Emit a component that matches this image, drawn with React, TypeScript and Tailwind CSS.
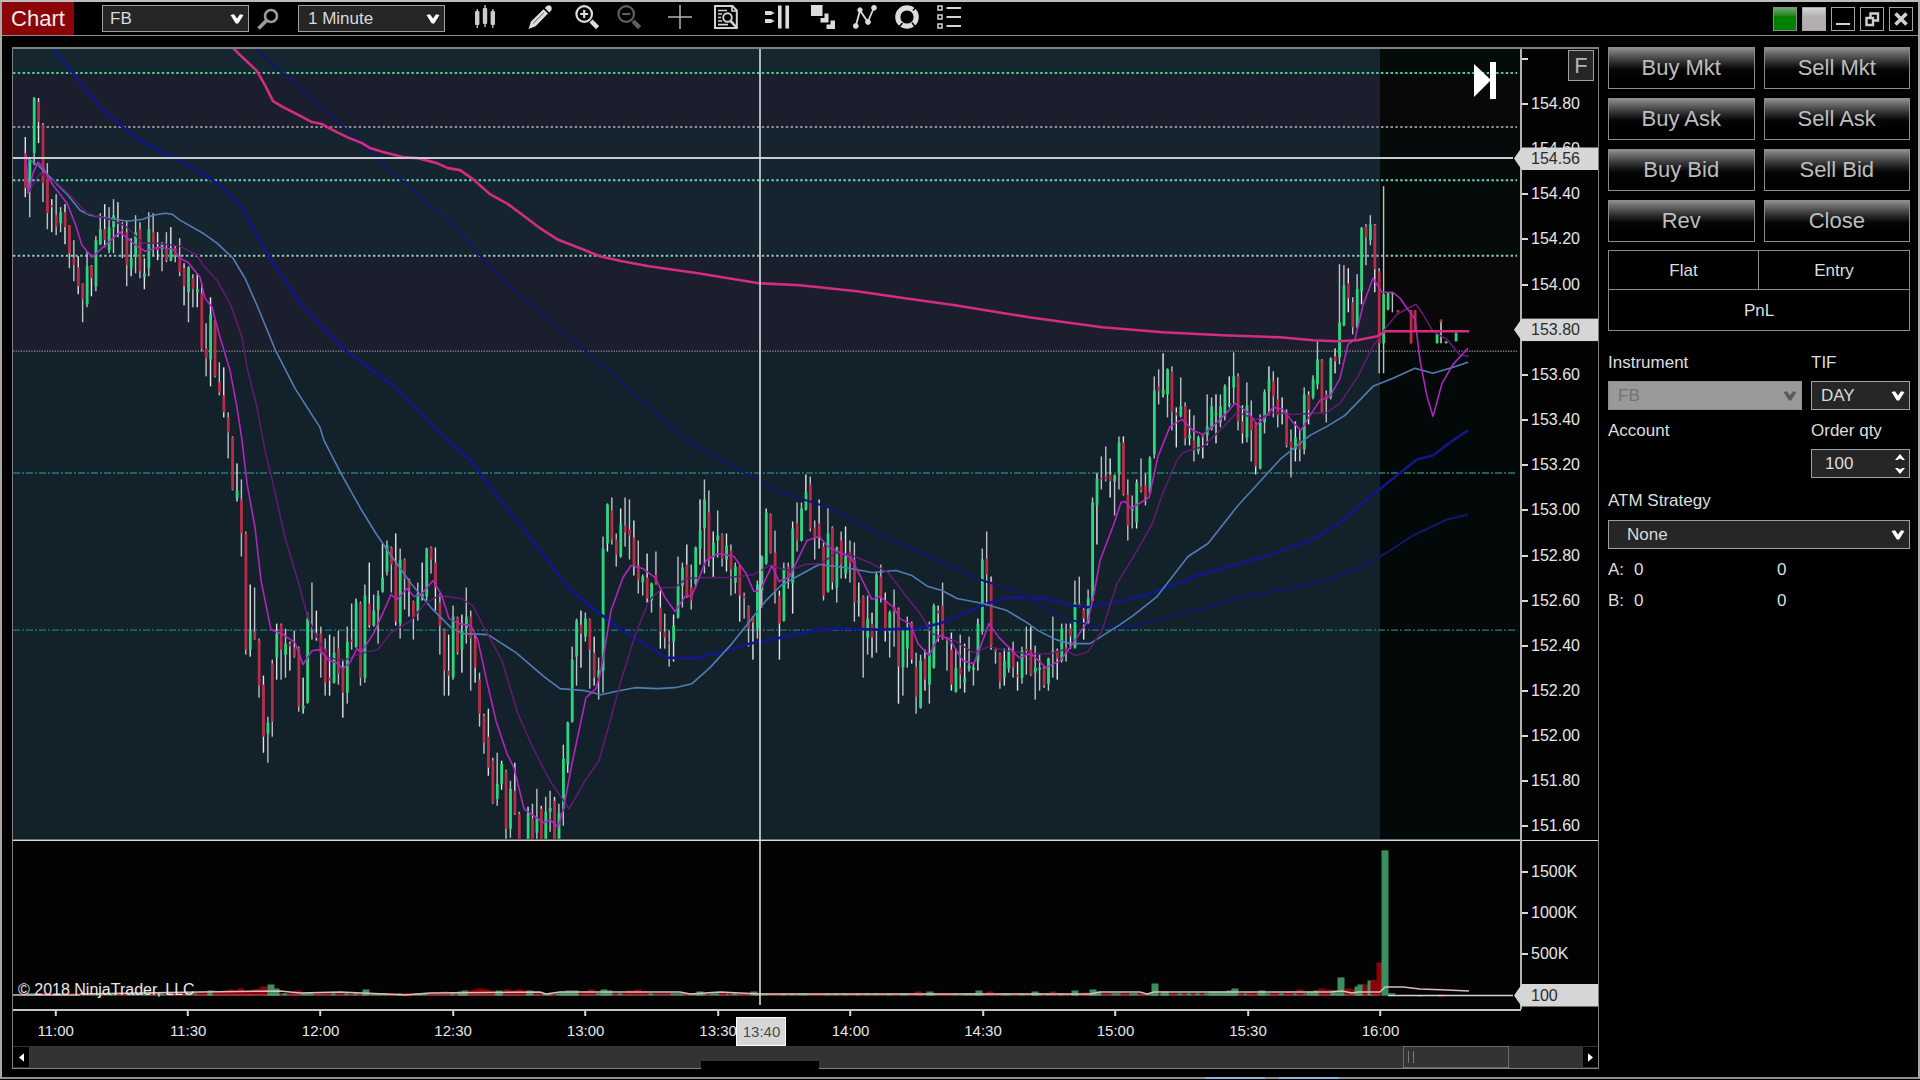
import React from "react";

/* ---------- Price data: colour + high,bodyTop,bodyBottom,low for one minute bars ---------- */

const CANDLES =
  "r137,153,188,197 g158,160,190,217 g97,98,153,165 r98,102,122,143 r123,125,183,202 r163,177,213,229 r199,205,207,232 r194,215,227,235 g207,212,223,232 r204,212,227,244 " +
  "r225,225,253,268 r240,258,265,281 r256,267,286,294 r283,283,299,322 g251,266,304,307 r265,266,278,296 g236,240,286,291 g213,229,244,245 r204,229,240,247 g207,227,250,253 " +
  "g199,215,227,253 r202,222,224,237 r222,229,231,258 r220,232,265,286 g238,258,268,276 g215,232,257,273 r222,229,271,278 g258,273,277,289 g212,229,268,276 r213,232,243,256 " +
  "r232,247,250,260 g242,243,249,271 r232,248,260,262 g227,248,260,261 r245,248,255,262 r238,257,272,276 r263,268,286,305 g266,267,292,322 r274,278,289,307 g273,289,292,307 " +
  "r283,293,349,351 r323,348,358,376 g297,314,359,386 r320,321,376,377 r362,382,392,395 r367,395,412,417 r412,417,432,458 r436,437,489,490 g463,490,498,501 r479,499,533,556 " +
  "r531,533,649,654 g584,630,649,656 r587,631,638,639 r638,640,685,697 r675,684,736,752 g716,722,733,762 r659,663,721,736 g623,633,657,679 r623,624,649,679 g628,643,654,677 " +
  "r641,643,646,670 r630,647,656,657 r646,647,706,711 g677,705,708,713 g612,618,702,703 g582,629,631,639 r610,632,637,640 r626,633,653,677 r638,648,682,695 r634,677,680,695 " +
  "g636,652,682,683 r630,648,673,684 r659,667,692,717 g626,641,692,703 r603,639,641,649 g598,602,646,647 r601,603,677,685 g584,595,677,682 r562,603,625,627 g594,610,625,626 " +
  "g590,595,609,643 g543,577,591,592 g540,545,571,575 r546,547,564,592 r533,563,621,625 g548,559,623,638 r558,559,578,609 r578,579,588,616 r600,601,617,639 g582,593,611,620 " +
  "g562,593,597,600 g547,548,596,600 r546,547,559,573 r547,562,587,610 r593,602,625,654 r628,629,670,695 r634,670,675,695 g605,616,677,679 r616,617,652,654 g614,630,649,672 " +
  "g587,616,628,643 r610,616,638,690 r633,637,667,682 r672,679,713,726 r713,715,742,753 r708,736,767,775 r757,760,802,803 g752,783,798,805 g760,763,783,789 r769,771,828,839 " +
  "g780,788,828,837 r762,790,813,814 r811,813,839,839 r839,839,839,839 g806,813,839,839 r803,818,839,839 g788,817,832,839 r805,808,839,839 g796,811,839,839 g790,807,811,831 " +
  "r796,800,839,839 g803,812,839,839 g744,758,808,825 g721,722,764,772 g646,659,721,722 g618,620,656,685 r610,624,633,667 g612,618,636,641 r618,619,649,688 r636,652,677,685 " +
  "g657,670,677,699 g536,548,670,692 g503,504,543,551 r497,510,539,544 r533,539,554,566 g508,523,556,557 r497,525,532,546 r499,529,535,559 r520,537,565,575 r540,565,580,593 " +
  "g574,576,582,595 r553,577,598,602 g582,583,600,612 r551,574,583,584 r589,607,631,648 r613,631,637,648 r630,641,643,666 g614,625,641,661 g556,585,617,618 g562,567,585,607 " +
  "r544,564,596,597 r564,587,600,609 g546,547,583,587 g499,530,548,564 g479,499,528,573 r490,512,560,566 g531,542,557,577 g510,535,540,557 r533,534,558,566 g533,545,559,571 " +
  "r544,550,569,595 g562,566,582,593 r565,566,595,621 r592,595,598,618 r605,606,628,646 r616,617,622,659 g580,584,628,638 g555,556,590,607 g508,512,563,564 r513,514,552,553 " +
  "r530,552,590,603 r590,595,623,659 g562,567,620,621 r562,566,578,588 g521,528,583,613 r502,523,540,551 g502,508,540,541 g474,492,509,510 r476,484,528,531 r520,527,537,559 " +
  "r499,523,537,548 r542,546,595,600 g506,533,591,592 r526,527,582,589 g546,547,587,602 r531,540,564,578 g526,556,573,578 r540,551,563,582 r542,559,602,621 g582,600,602,616 " +
  "r595,596,628,677 g595,618,637,654 r612,623,637,657 g572,574,631,652 r564,576,597,602 r592,600,630,641 g610,612,632,657 r589,606,611,646 r607,608,666,703 g628,630,667,695 " +
  "g616,627,648,667 r621,622,659,663 r652,666,696,713 g654,660,707,708 r649,658,679,690 g621,653,684,703 g603,605,667,668 r605,610,613,641 r582,605,638,639 r637,638,640,670 " +
  "r632,649,684,690 g648,667,691,692 r634,667,674,688 g643,677,682,692 g636,665,668,671 g662,667,669,685 g618,623,661,670 g548,559,631,634 r531,558,574,605 r576,581,645,649 " +
  "r648,649,651,663 r652,653,681,688 g648,660,677,685 g646,651,668,672 r641,650,667,677 r661,674,676,690 g646,650,677,683 r626,648,651,674 r626,649,674,675 g645,667,672,699 " +
  "g654,667,669,690 r666,667,685,687 g657,658,683,690 g616,650,652,677 r648,650,658,679 g623,628,660,662 r623,647,652,661 r623,628,636,648 g580,602,647,648 r576,603,605,607 " +
  "r606,609,618,639 g589,598,622,623 g497,502,600,601 g473,478,505,544 r456,477,479,489 r446,476,479,481 r458,474,481,497 g474,475,481,515 g436,442,474,489 r436,442,494,495 " +
  "r479,494,525,540 g495,508,510,528 g479,482,522,528 r458,486,490,492 r473,485,497,505 g456,458,492,494 g376,390,454,458 r369,386,391,404 g353,389,394,397 g368,369,394,417 " +
  "r366,371,412,430 r407,412,415,447 g377,406,416,417 r402,406,438,445 g409,435,438,445 r415,440,450,461 g435,437,451,454 r434,435,437,458 g394,426,435,445 g397,406,429,430 " +
  "g394,412,415,443 g394,406,422,427 g384,386,414,420 g376,403,405,407 g352,376,387,403 r373,376,421,430 r405,421,433,443 g382,405,437,442 r400,417,430,461 r422,423,466,474 " +
  "g414,422,468,469 g389,392,422,433 g366,379,391,415 r371,381,396,417 r377,399,415,427 g397,412,414,424 r409,412,445,447 r429,441,447,477 g421,437,449,461 r430,440,449,461 " +
  "g387,394,449,454 r391,394,410,424 g375,379,397,399 g341,359,384,389 r359,360,412,413 r390,394,399,422 g357,358,397,399 r348,356,361,373 g264,322,357,364 g265,285,325,326 " +
  "r268,283,298,312 r297,302,327,334 g274,289,327,328 g227,228,291,304 r224,226,237,265 g215,224,240,245 r224,225,269,292 r268,271,343,373 g186,294,343,373 g292,293,309,310 " +
  "g293,293,294,312";

const FIRST_X = 25.3;
const BAR_STEP = 4.41;

const bars = CANDLES.split(" ").map((row, i) => {
  const [high, top, bottom, low] = row.slice(1).split(",").map(Number);
  return { up: row[0] === "g", x: FIRST_X + i * BAR_STEP, high, top, bottom, low };
});

const lateBars = [
  { up: false, x: 1398, high: 310, top: 310, bottom: 312, low: 312 },
  { up: false, x: 1411, high: 310, top: 310, bottom: 343, low: 343 },
  { up: false, x: 1415, high: 310, top: 310, bottom: 330, low: 330 },
  { up: true, x: 1437, high: 333, top: 334, bottom: 343, low: 343 },
  { up: false, x: 1441, high: 321, top: 319, bottom: 322, low: 343 },
  { up: true, x: 1446, high: 341, top: 341, bottom: 343, low: 343 },
  { up: true, x: 1456, high: 332, top: 333, bottom: 341, low: 341 },
];

const allBars = [...bars, ...lateBars];

/* ---------- Indicator lines ---------- */

const VWAP =
  "231,46 240,55 257,71 265,85 273,101 283,107 295,113 312,122 322,124 333,130 347,137 362,143 370,148 383,152 403,157 417,158 437,163 448,168 460,170 473,179 490,194 508,204 527,218 540,228 557,239 580,248 600,256 622,261 649,266 698,273 759,283 800,285 857,291 905,298 955,305 1029,317 1102,327 1163,332 1223,335 1280,337 1313,340 1337,341 1357,340 1377,336 1385,331 1469,331";
const SLOW_BLUE =
  "27,158 38,165 53,180 67,194 80,210 90,215 110,218 127,221 143,219 153,215 165,213 172,214 180,220 203,233 217,243 233,258 245,278 257,305 275,349 295,388 320,427 324,440 342,475 360,507 376,533 391,555 411,583 431,607 451,627 463,633 488,634 516,652 544,676 560,688 585,690 601,694 619,690 635,687 657,688 675,687 692,683 710,667 732,643 748,623 766,600 781,585 797,576 819,564 845,567 872,572 896,570 912,575 928,586 942,590 957,598 983,603 1007,610 1027,622 1038,630 1056,639 1070,643 1090,643 1120,624 1133,615 1157,596 1188,556 1208,543 1223,524 1238,505 1260,481 1280,459 1310,435 1327,426 1345,415 1373,386 1393,378 1415,368 1433,373 1453,367 1468,362";
const FAST_MAGENTA =
  "26,154 28,193 33,173 38,162 43,167 53,185 67,203 75,223 82,245 92,257 103,247 120,232 133,243 145,251 158,247 173,249 180,258 188,262 200,277 205,298 212,307 220,337 230,370 237,407 242,440 247,483 255,527 261,580 271,629 283,634 295,642 303,664 312,650 320,649 328,659 336,662 343,668 350,662 357,648 361,652 374,632 384,610 391,594 397,599 407,588 414,596 421,594 433,580 441,593 449,618 459,623 471,625 478,640 486,677 496,720 507,753 514,767 524,808 544,822 550,819 558,826 563,810 572,763 586,697 596,688 601,670 611,610 623,577 631,565 643,568 655,577 665,597 675,611 685,596 692,595 706,560 718,553 734,556 746,573 754,591 760,590 772,565 779,581 789,577 807,540 819,536 829,547 851,557 861,577 872,599 880,596 894,607 900,618 910,623 918,643 929,655 939,635 949,638 963,660 974,663 989,623 999,637 1019,657 1031,653 1046,667 1060,660 1070,647 1088,620 1094,593 1100,560 1114,523 1121,502 1125,501 1131,508 1149,497 1158,456 1170,426 1182,419 1193,430 1203,434 1213,426 1227,412 1235,403 1248,412 1257,424 1265,417 1273,407 1283,409 1293,422 1301,430 1310,415 1320,400 1330,396 1340,378 1348,344 1355,339 1363,305 1373,278 1382,292 1393,292 1400,298 1407,308 1415,319 1420,360 1427,396 1433,416 1442,383 1453,364 1468,348";
const SLOW_PURPLE =
  "28,193 40,173 57,183 72,197 87,213 113,220 127,227 143,243 157,243 180,246 197,255 203,265 217,280 230,303 242,337 247,367 257,407 265,450 273,483 285,537 297,577 308,617 316,635 328,657 344,660 360,653 378,649 391,632 411,620 425,603 439,595 461,598 473,605 482,623 502,660 518,713 532,745 550,780 569,808 585,780 599,760 611,717 621,680 635,635 649,600 663,587 675,587 686,578 706,577 730,577 754,574 769,565 789,570 805,564 821,563 837,552 852,555 872,563 888,572 904,593 920,613 932,633 955,640 973,652 989,646 1007,650 1027,653 1050,653 1064,649 1076,655 1088,651 1102,630 1117,583 1133,557 1152,524 1163,492 1177,460 1183,452 1203,446 1220,430 1237,412 1257,419 1273,412 1293,414 1327,412 1340,403 1358,376 1373,346 1387,326 1397,314 1408,308 1416,304 1423,314 1433,331 1447,339 1460,355 1469,356";
const NAVY_A =
  "50,45 73,73 100,107 120,125 143,142 173,157 200,172 220,185 240,205 250,223 270,258 300,303 345,350 393,385 447,440 471,460 498,497 526,532 550,563 569,588 593,608 620,628 647,645 667,657 694,658 718,652 750,643 781,637 813,630 837,628 876,629 916,628 940,623 963,613 987,603 1007,597 1046,598 1066,604 1086,607 1114,602 1145,595 1173,585 1197,575 1237,564 1267,555 1310,540 1337,524 1367,499 1393,478 1417,459 1433,455 1450,442 1468,430";
const NAVY_B =
  "252,45 287,77 338,122 380,160 413,190 453,225 480,255 514,290 551,321 612,373 650,408 688,440 718,458 758,480 781,492 829,507 868,528 916,550 948,565 983,580 1019,592 1034,600 1058,615 1090,625 1121,627 1149,622 1180,613 1213,606 1240,596 1280,590 1327,580 1360,567 1387,552 1413,535 1447,519 1468,514";
const VOLUME_AVG =
  "80,993 200,991 280,990 300,992 340,991 385,993 405,994 430,992 540,991 546,993 560,991 680,991 690,993 720,991 760,993 1090,993 1100,991 1140,991 1147,993 1154,991 1330,991 1342,990 1352,992 1358,991 1380,991 1385,986 1403,986 1420,988 1447,989 1469,990";

const BANDS = [
  { y: 46, h: 27, day: "#14262f", night: "#030c09" },
  { y: 73, h: 54, day: "#1b1f2d", night: "#080808" },
  { y: 127, h: 128, day: "#16242f", night: "#050b0b" },
  { y: 255, h: 96, day: "#1b1f2d", night: "#090808" },
  { y: 351, h: 488, day: "#13212b", night: "#030909" },
];

const LEVELS = [
  { y: 73, color: "#3fd694", width: 2, dash: "2.4 2.4" },
  { y: 127, color: "#8f8f93", width: 2, dash: "2.4 2.4" },
  { y: 180, color: "#62d8bd", width: 2, dash: "2.4 2.4" },
  { y: 255.5, color: "#84cdb8", width: 2, dash: "2.4 2.4" },
  { y: 351, color: "#77777d", width: 1.4, dash: "1.4 1.2" },
  { y: 472.5, color: "#1f7f7b", width: 1.4, dash: "7 2 2 2" },
  { y: 629.5, color: "#1f7f7b", width: 1.4, dash: "7 2 2 2" },
];

const SPIKES: [number, number, boolean][] = [
  [200, 3, false], [206, 3, false], [211, 5, true], [216, 4, false], [221, 4, false], [226, 5, false],
  [231, 6, false], [236, 5, false], [241, 7, false], [246, 4, false], [250, 5, false], [255, 6, false],
  [260, 7, false], [264, 9, false], [271, 11, true], [276, 7, true], [298, 5, false], [366, 6, true],
  [445, 4, false], [461, 4, true], [465, 5, true], [471, 5, false], [476, 6, false], [481, 7, false],
  [486, 6, false], [491, 5, false], [499, 5, true], [507, 6, false], [514, 5, false], [519, 6, false],
  [524, 5, false], [530, 5, true], [537, 4, false], [563, 4, true], [569, 5, true], [575, 5, true],
  [585, 4, false], [591, 6, false], [604, 6, true], [609, 5, true], [630, 5, false], [638, 6, false],
  [645, 4, false], [700, 4, true], [723, 4, false], [754, 4, true], [918, 4, false], [930, 4, true],
  [979, 5, true], [990, 4, false], [1035, 4, true], [1053, 4, false], [1075, 5, true], [1085, 3, false],
  [1093, 6, true], [1098, 4, true], [1155, 12, true], [1165, 4, true], [1212, 4, true], [1218, 4, true],
  [1225, 4, true], [1230, 5, true], [1235, 7, true], [1250, 4, false], [1262, 5, true], [1275, 4, false],
  [1290, 4, false], [1300, 6, false], [1310, 4, true], [1317, 5, true], [1322, 7, false], [1328, 6, false],
  [1334, 5, true], [1341, 18, true], [1348, 7, false], [1353, 6, false], [1358, 9, true], [1361, 11, true],
  [1366, 11, false], [1371, 15, true], [1374, 15, false], [1380, 33, false], [1385, 145, true],
];

/* ---------- Plot geometry ---------- */

const PLOT = { x: 13, y: 49, w: 1507, h: 959 };
const xPct = (x: number) => `${((x - PLOT.x) / PLOT.w) * 100}%`;
const yPct = (y: number) => `${((y - PLOT.y) / PLOT.h) * 100}%`;

const PRICES = Array.from({ length: 17 }, (_, i) => ({
  label: (154.8 - i * 0.2).toFixed(2),
  y: 104 + i * 45.1,
}));
const VOLUMES = [
  { label: "1500K", y: 871 },
  { label: "1000K", y: 912 },
  { label: "500K", y: 953 },
];
const TIMES = ["11:00", "11:30", "12:00", "12:30", "13:00", "13:30", "14:00", "14:30", "15:00", "15:30", "16:00"].map(
  (label, i) => ({ label, x: 55.6 + i * 132.4 }),
);

function Line({ points, color, width }: { points: string; color: string; width: number }) {
  return (
    <polyline points={points} fill="none" stroke={color} strokeWidth={width} strokeLinejoin="round" vectorEffect="non-scaling-stroke" />
  );
}

function Plot() {
  return (
    <svg
      className="block h-full w-full"
      viewBox={`${PLOT.x} ${PLOT.y} ${PLOT.w} ${PLOT.h}`}
      preserveAspectRatio="none"
      role="img"
      aria-label="FB one minute price and volume chart"
    >
      {BANDS.map((b) => (
        <g key={b.y}>
          <rect x={13} y={b.y} width={1367} height={b.h} fill={b.day} />
          <rect x={1380} y={b.y} width={140} height={b.h} fill={b.night} />
        </g>
      ))}
      {LEVELS.map((l) => (
        <line key={l.y} x1={13} x2={1517} y1={l.y} y2={l.y} stroke={l.color} strokeWidth={l.width} strokeDasharray={l.dash} />
      ))}
      {allBars.map((b, i) => (
        <rect key={i} x={b.x - 0.7} y={b.high} width={1.4} height={b.low - b.high} fill={i % 3 ? "#b9c2c4" : "#dfe6e6"} />
      ))}
      {allBars.map((b, i) => (
        <rect key={i} x={b.x - 1.3} y={b.top} width={2.8} height={Math.max(b.bottom - b.top, 0)} fill={b.up ? "#2bd67f" : "#b62d48"} />
      ))}
      <Line points={NAVY_A} color="#10178a" width={2.6} />
      <Line points={NAVY_B} color="#13176b" width={2} />
      <Line points={SLOW_BLUE} color="#527db3" width={1.6} />
      <Line points={SLOW_PURPLE} color="#641a72" width={1.5} />
      <Line points={FAST_MAGENTA} color="#b324bf" width={1.6} />
      <Line points={VWAP} color="#d62b83" width={2.6} />
      <line x1={13} x2={1513} y1={158} y2={158} stroke="#c9cfd0" strokeWidth={2} />

      <rect x={13} y={838} width={1507} height={170} fill="#030303" />
      <line x1={13} x2={1520} y1={839.5} y2={839.5} stroke="#dcdcdc" strokeWidth={1.5} />
      {bars.map((b, i) => (
        <rect key={i} x={b.x - 3} y={992} width={6} height={2.5} fill={b.up ? "#2f7350" : "#7d0a10"} />
      ))}
      {SPIKES.map(([x, h, up]) => (
        <rect key={x} x={x - 3.5} y={994.5 - h} width={7} height={h} fill={up ? "#3a8f60" : "#8b0208"} />
      ))}
      <rect x={1417} y={994} width={6} height={2} fill="#123222" />
      <rect x={1438} y={993} width={7} height={3} fill="#4d0a0e" />
      <line x1={13} x2={80} y1={994} y2={994} stroke="#c9c9c9" strokeWidth={1.4} />
      <line x1={1388} x2={1513} y1={994.5} y2={994.5} stroke="#d2d2d2" strokeWidth={1.4} />
      <polyline points="80,994 1380,994" fill="none" stroke="#d8b8b4" strokeOpacity={0.5} strokeWidth={1} />
      <Line points={VOLUME_AVG} color="#d5c0bc" width={1.4} />

      <line x1={760} x2={760} y1={46} y2={1004} stroke="#d8dcdc" strokeWidth={1.6} />
      <path d="M1474 64 L1491 80 L1474 97 Z" fill="#fff" />
      <rect x={1490} y={62} width={6} height={37} fill="#fff" />
    </svg>
  );
}

function AxisLabel({ label, y }: { label: string; y: number }) {
  return (
    <div className="absolute left-0 flex -translate-y-1/2 items-center gap-[3px]" style={{ top: yPct(y) }}>
      <span className="h-[2px] w-[6px] bg-[#d8d8d8]" />
      <span className="text-[16px] leading-[18px] text-[#e6e6e6]">{label}</span>
    </div>
  );
}

function AxisMarker({ label, y }: { label: string; y: number }) {
  return (
    <div
      className="absolute -left-2 right-0 flex h-[23px] -translate-y-1/2 items-center bg-[#d6d6d6] pl-[17px] text-[16px] leading-[18px] text-[#2c2c2c] [clip-path:polygon(0_50%,8px_0,100%_0,100%_100%,8px_100%)]"
      style={{ top: yPct(y) }}
    >
      {label}
    </div>
  );
}

function Chevron({ className }: { className: string }) {
  return (
    <svg viewBox="0 0 14 12" className={`pointer-events-none absolute top-1/2 h-3 w-[14px] -translate-y-1/2 ${className}`} aria-hidden="true">
      <path d="M0.5 2 L4 1.2 L7 5.6 L10 1.2 L13.5 2 L8.2 10.5 L5.8 10.5 Z" fill="currentColor" />
    </svg>
  );
}

function SelectBox({ id, label, value, className, disabled, pad }: { id: string; label?: string; value: string; className: string; disabled?: boolean; pad: string }) {
  return (
    <div className={`relative ${className}`}>
      <select
        id={id}
        aria-label={label}
        defaultValue={value}
        disabled={disabled}
        className={`h-full w-full appearance-none border text-[17px] leading-5 opacity-100 outline-none ${pad} ${
          disabled ? "border-[#8e8e8e] bg-[#999] text-[#737373]" : "border-[#a0a0a0] bg-[#262626] text-[#dadada]"
        }`}
      >
        <option>{value}</option>
      </select>
      <Chevron className={disabled ? "right-[5px] text-[#5a5a5a]" : "right-[5px] text-white"} />
    </div>
  );
}

/* ---------- Toolbar icons, each drawn on a 24 unit square ---------- */

const TOOLS: { name: string; gap: string; icon: React.ReactNode }[] = [
  {
    name: "Chart style",
    gap: "ml-[28px]",
    icon: (
      <g fill="#c9cdd2">
        <rect x="2" y="6" width="4.4" height="14" rx="1" />
        <rect x="3.6" y="4" width="1.3" height="19" />
        <rect x="9.8" y="3" width="4.4" height="16" rx="1" />
        <rect x="11.4" y="0" width="1.3" height="22" />
        <rect x="17.6" y="6" width="4.4" height="14" rx="1" />
        <rect x="19.2" y="4" width="1.3" height="19" />
      </g>
    ),
  },
  {
    name: "Drawing tools",
    gap: "ml-[31px]",
    icon: (
      <g>
        <path d="M0.5 24 L3 16.5 L15.5 4.2 L20 8.6 L7.6 21.2 Z" fill="#dedede" />
        <path d="M16.8 3 L18.8 1 Q21 -0.4 23 1.3 Q24.8 3.4 23.2 5.4 L21.2 7.4 Z" fill="#dedede" />
        <path d="M5 18.5 L16 7.6" stroke="#444" strokeWidth="0.9" />
      </g>
    ),
  },
  {
    name: "Zoom in",
    gap: "ml-[23px]",
    icon: (
      <g fill="none" stroke="#dcdcdc">
        <circle cx="9.2" cy="9" r="7.8" strokeWidth="2.2" />
        <path d="M9.2 5v8M5.2 9h8" strokeWidth="2.2" />
        <path d="M16 16 L22.6 22.6" strokeWidth="4.4" />
      </g>
    ),
  },
  {
    name: "Zoom out",
    gap: "ml-[18px]",
    icon: (
      <g fill="none" stroke="#5f5f5f">
        <circle cx="9.2" cy="9" r="7.8" strokeWidth="2.2" />
        <path d="M5.2 9h8" strokeWidth="2.2" />
        <path d="M16 16 L22.6 22.6" strokeWidth="4.4" />
      </g>
    ),
  },
  {
    name: "Crosshair",
    gap: "ml-[27px]",
    icon: <path d="M12 0v24M0 12h24" stroke="#b4b4b4" strokeWidth="1.5" />,
  },
  {
    name: "Data box",
    gap: "ml-[22px]",
    icon: (
      <g fill="none" stroke="#d4d4d4">
        <path d="M1 1H18.5L22.8 5.5V23H1Z" strokeWidth="2" />
        <path d="M18 1V6H23" strokeWidth="1.6" />
        <path d="M4 5.5h9M4 9h4M4 12.5h3M4 16h4M4 19.6h10" strokeWidth="1.6" />
        <circle cx="13.5" cy="12.5" r="4.3" strokeWidth="1.9" />
        <path d="M16.5 15.8 L23 23" strokeWidth="2.6" />
      </g>
    ),
  },
  {
    name: "Chart trader",
    gap: "ml-[27px]",
    icon: (
      <g fill="#dcdcdc">
        <rect x="13" y="0.5" width="3.6" height="23" />
        <rect x="20.4" y="0.5" width="3.6" height="23" />
        <path d="M0 6H6L9.5 8L6 10H0Z" />
        <path d="M0 14H6L9.5 16L6 18H0Z" />
      </g>
    ),
  },
  {
    name: "Data series",
    gap: "ml-[22px]",
    icon: (
      <g fill="#dcdcdc">
        <rect x="0" y="0" width="11.5" height="11" />
        <path d="M13.5 8.5H17.5V17.5H9.5V13H13.5Z" />
        <path d="M19.5 15.5H24V24H15.5V19.5H19.5Z" />
      </g>
    ),
  },
  {
    name: "Indicators",
    gap: "ml-[18px]",
    icon: (
      <g fill="#dcdcdc" stroke="#dcdcdc">
        <path d="M2.8 21 L7 5.5 L14.8 17 L20.8 3" fill="none" strokeWidth="1.8" />
        <circle cx="2.8" cy="21" r="2.4" />
        <circle cx="7" cy="5" r="2.2" />
        <circle cx="15" cy="17" r="2.4" />
        <circle cx="21" cy="2.8" r="2.4" />
      </g>
    ),
  },
  {
    name: "Strategies",
    gap: "ml-[18px]",
    icon: (
      <g fill="none">
        <circle cx="12" cy="12" r="9.2" stroke="#dcdcdc" strokeWidth="5.2" />
        <path d="M18 5.5 L22 1.5M17 17.5 L20.5 22.5M7.5 18 L4 22" stroke="#000" strokeWidth="1.5" />
      </g>
    ),
  },
  {
    name: "Properties",
    gap: "ml-[18px]",
    icon: (
      <g fill="none" stroke="#d4d4d4">
        <path d="M1 1h4v4h-4zM1 10h4v4h-4zM1 19h4v4h-4z" strokeWidth="1.5" />
        <path d="M9.5 3H24M9.5 12H24M9.5 21H24" strokeWidth="2" />
      </g>
    ),
  },
];

function Toolbar() {
  return (
    <header className="flex h-[34px] shrink-0 items-center border-b border-[#8a8a8a] bg-black">
      <h1 className="flex h-full w-[72px] items-center justify-center bg-[#8b0508] text-[22px] leading-6 text-[#ececec]">Chart</h1>
      <SelectBox id="symbol" label="Symbol" value="FB" className="ml-7 h-[27px] w-[147px]" pad="pl-[7px]" />
      <button type="button" aria-label="Search instrument" className="ml-2 h-[22px] w-[22px]">
        <svg viewBox="0 0 22 22" className="h-full w-full" fill="none" stroke="#9c9c9c">
          <circle cx="14" cy="8" r="6" strokeWidth="2.6" />
          <path d="M9.5 12.5 L1.5 20.5" strokeWidth="3.6" />
        </svg>
      </button>
      <SelectBox id="interval" label="Interval" value="1 Minute" className="ml-[19px] h-[27px] w-[147px]" pad="pl-[9px]" />
      <div className="flex h-full items-start pt-[3px]">
        {TOOLS.map((t) => (
          <button key={t.name} type="button" aria-label={t.name} className={`h-6 w-6 shrink-0 ${t.gap}`}>
            <svg viewBox="0 0 24 24" className="h-full w-full overflow-visible">
              {t.icon}
            </svg>
          </button>
        ))}
      </div>
      <div className="ml-auto flex items-center gap-[5px] pr-[5px]">
        <button type="button" aria-label="Instrument link" className="h-6 w-6 border border-[#8a8a8a] bg-linear-to-b from-[#6ba86b] via-[#008000] via-40% to-[#008000]" />
        <button type="button" aria-label="Interval link" className="h-6 w-6 border border-[#aaa] bg-linear-to-b from-[#d6d6d6] via-[#b3afb1] via-40% to-[#b0adae]" />
        <button type="button" aria-label="Minimize" className="h-6 w-6 border border-[#a5a5a5]">
          <svg viewBox="0 0 22 22" className="h-full w-full">
            <rect x="4" y="15" width="14" height="2" fill="#d0d0d0" />
          </svg>
        </button>
        <button type="button" aria-label="Restore" className="h-6 w-6 border border-[#a5a5a5]">
          <svg viewBox="0 0 22 22" className="h-full w-full" fill="none" stroke="#cfcfcf" strokeWidth="2.4">
            <path d="M5.5 10H12V17H5.5Z" />
            <path d="M9.5 9V5.5H17V12.5H13" />
          </svg>
        </button>
        <button type="button" aria-label="Close window" className="h-6 w-6 border border-[#a5a5a5]">
          <svg viewBox="0 0 22 22" className="h-full w-full" stroke="#d0d0d0" strokeWidth="3.6">
            <path d="M5.5 5.5 L16.5 16.5M16.5 5.5 L5.5 16.5" />
          </svg>
        </button>
      </div>
    </header>
  );
}

function ChartPanel() {
  return (
    <section className="relative flex min-w-0 flex-1 flex-col border border-t-2 border-[#808080] bg-black">
      <div className="flex min-h-0 flex-1">
        <div className="relative min-w-0 flex-1">
          <div className="absolute inset-0">
            <Plot />
          </div>
          <p className="absolute bottom-[9px] left-[5px] text-[16px] leading-5 whitespace-nowrap text-[#e8e8e8]">© 2018 NinjaTrader, LLC</p>
        </div>
        <div className="relative w-[78px] shrink-0 border-l-2 border-[#b4b4b4] bg-[#020202]">
          <span className="absolute left-0 h-[2px] w-[6px] bg-[#d8d8d8]" style={{ top: yPct(58) }} />
          {[...PRICES, ...VOLUMES].map((p) => (
            <AxisLabel key={p.label} label={p.label} y={p.y} />
          ))}
          <span className="absolute inset-x-0 h-px bg-[#dcdcdc]" style={{ top: yPct(839) }} />
          <AxisMarker label="154.56" y={158.5} />
          <AxisMarker label="153.80" y={329.5} />
          <AxisMarker label="100" y={994.5} />
          <button type="button" className="absolute top-[1px] right-[4px] h-[31px] w-[26px] border border-[#a0a0a0] bg-[#262626] text-[22px] leading-7 text-[#b4b4b4]">
            F
          </button>
        </div>
      </div>
      <div className="flex h-[37px] shrink-0">
        <div className="relative min-w-0 flex-1 border-t-2 border-[#c4c4c4]">
          {TIMES.map((t) => (
            <div key={t.label} className="absolute top-0 flex -translate-x-1/2 flex-col items-center gap-[6px]" style={{ left: xPct(t.x) }}>
              <span className="h-[5px] w-[2px] bg-[#d8d8d8]" />
              <span className="text-[15px] leading-[18px] text-[#e6e6e6]">{t.label}</span>
            </div>
          ))}
          <div
            className="absolute top-[6px] flex h-[29px] w-[50px] -translate-x-1/2 items-center justify-center border border-white bg-[#d6d6d6] text-[15px] leading-[18px] text-[#4a4a4a]"
            style={{ left: xPct(761) }}
          >
            13:40
          </div>
        </div>
        <div className="w-[77px] shrink-0" />
      </div>
      <div className="flex h-[22px] shrink-0 items-center bg-[#333]">
        <button type="button" aria-label="Scroll left" className="flex h-5 w-4 items-center justify-center bg-black">
          <svg viewBox="0 0 6 10" className="h-[9px] w-[5px]">
            <path d="M6 0V10L0 5Z" fill="#fff" />
          </svg>
        </button>
        <div className="flex h-full flex-1 justify-end pr-[74px]">
          <div className="flex h-full w-[106px] items-center gap-1 border border-[#6a6a6a] pl-1">
            <span className="h-3 w-px bg-[#777]" />
            <span className="h-3 w-px bg-[#777]" />
          </div>
        </div>
        <button type="button" aria-label="Scroll right" className="flex h-5 w-[15px] items-center justify-center bg-black">
          <svg viewBox="0 0 6 10" className="h-[9px] w-[5px]">
            <path d="M0 0V10L6 5Z" fill="#fff" />
          </svg>
        </button>
      </div>
      <div className="absolute -bottom-px left-[43.4%] h-2 w-[118px] bg-black" />
    </section>
  );
}

const ORDERS = ["Buy Mkt", "Sell Mkt", "Buy Ask", "Sell Ask", "Buy Bid", "Sell Bid", "Rev", "Close"];

function TradePanel() {
  return (
    <aside className="w-[302px] shrink-0 text-[17px] leading-5 text-[#dedede]">
      <div className="grid grid-cols-2 gap-[9px]">
        {ORDERS.map((o) => (
          <button
            key={o}
            type="button"
            className="h-[42px] border border-[#8c8c8c] bg-linear-to-b from-[#8f8f8f] via-[#050505] via-55% to-black text-[22px] leading-6 text-[#bdbdbd]"
          >
            {o}
          </button>
        ))}
      </div>
      <div className="mt-2 border border-[#8a8a8a] text-center">
        <div className="grid grid-cols-2 border-b border-[#8a8a8a]">
          <div className="border-r border-[#8a8a8a] pt-[10px] pb-2">Flat</div>
          <div className="pt-[10px] pb-2">Entry</div>
        </div>
        <div className="pt-[11px] pb-[9px]">PnL</div>
      </div>
      <div className="mt-[22px] grid grid-cols-[194px_1fr] gap-x-[9px]">
        <label htmlFor="instrument">Instrument</label>
        <label htmlFor="tif">TIF</label>
        <SelectBox id="instrument" value="FB" disabled className="mt-2 h-[29px]" pad="pl-[9px]" />
        <SelectBox id="tif" value="DAY" className="mt-2 h-[29px]" pad="pl-[9px]" />
        <span className="mt-[11px]">Account</span>
        <label htmlFor="qty" className="mt-[11px]">
          Order qty
        </label>
        <span />
        <div className="relative mt-2 h-[29px]">
          <input id="qty" type="text" defaultValue="100" className="h-full w-full border border-[#a0a0a0] bg-[#262626] pl-[13px] outline-none" />
          <svg viewBox="0 0 10 20" className="pointer-events-none absolute top-[5px] right-[5px] h-5 w-[10px]" aria-hidden="true">
            <path d="M0 6 L5 0 L10 6 L7.5 6 L5 4.6 L2.5 6ZM0 14 L5 20 L10 14 L7.5 14 L5 15.4 L2.5 14Z" fill="#fff" />
          </svg>
        </div>
      </div>
      <label htmlFor="atm" className="mt-[13px] block">
        ATM Strategy
      </label>
      <SelectBox id="atm" value="None" className="mt-[9px] h-[29px]" pad="pl-[18px]" />
      <dl className="mt-[11px] grid grid-cols-[26px_143px_1fr] gap-y-[11px]">
        <dt>A:</dt>
        <dd>0</dd>
        <dd>0</dd>
        <dt>B:</dt>
        <dd>0</dd>
        <dd>0</dd>
      </dl>
    </aside>
  );
}

export default function App() {
  return (
    <div className="flex h-screen min-h-[720px] flex-col bg-black pb-px font-['Liberation_Sans',Arial,sans-serif]">
      <div className="relative flex min-h-0 flex-1 flex-col border-2 border-[#a9a9a9] border-t-[#bdbdbd] border-b-[#8f8f8f]">
        <Toolbar />
        <main className="flex min-h-0 flex-1 gap-[9px] pt-[11px] pr-2 pb-2 pl-[10px]">
          <ChartPanel />
          <TradePanel />
        </main>
        <div className="absolute -bottom-[2px] left-[62.8%] flex h-[2px] gap-[14px]">
          <span className="w-[60px] bg-[#8fb4d6]" />
          <span className="w-[60px] bg-[#8fb4d6]" />
        </div>
      </div>
    </div>
  );
}
